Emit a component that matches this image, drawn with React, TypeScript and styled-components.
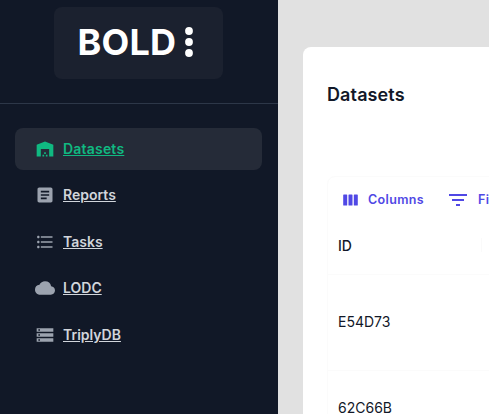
import React from "react";
import styled, { createGlobalStyle } from "styled-components";
import {
  MdArticle,
  MdCloud,
  MdFilterList,
  MdFormatListBulleted,
  MdStorage,
  MdWarehouse,
} from "react-icons/md";

const GlobalStyle = createGlobalStyle`
  * { box-sizing: border-box; }
  body {
    margin: 0;
    overflow: hidden;
    background: #e1e1e1;
    color: #121828;
    font-family: Inter, "Liberation Sans", sans-serif;
  }
`;

const Shell = styled.div`
  display: flex;
  height: 414px;
  overflow: hidden;
`;

const Sidebar = styled.aside`
  flex: 0 0 278px;
  background: #111827;
`;

const LogoArea = styled.div`
  display: flex;
  justify-content: center;
  height: 104px;
  padding: 7px 1px 0 0;
  border-bottom: 1px solid #2d3748;
`;

const LogoCard = styled.div`
  display: flex;
  align-items: center;
  width: 169px;
  height: 72px;
  padding-left: 23.5px;
  border-radius: 8px;
  background: #1b212f;
  color: #fff;
`;

const LogoText = styled.span`
  width: 106.5px;
  font-size: 36px;
  font-weight: 700;
  line-height: 44px;
  letter-spacing: 0.2px;
  padding-bottom: 2px;
`;

const LogoDots = styled.svg`
  margin-bottom: 2px;
`;

const Nav = styled.nav`
  display: flex;
  flex-direction: column;
  gap: 4.4px;
  padding: 24px 16px 0 15px;
`;

const NavItem = styled.a<{ $active?: boolean }>`
  display: flex;
  align-items: center;
  gap: 8px;
  height: 42px;
  padding-left: 20px;
  border-radius: 8px;
  background: ${(p) => (p.$active ? "#252b38" : "transparent")};
  color: ${(p) => (p.$active ? "#10b981" : "#d1d5db")};
  font-size: 14px;
  font-weight: 600;
  line-height: 24px;
  letter-spacing: ${(p) => (p.$active ? "0.2px" : "0")};

  svg {
    flex: none;
    color: ${(p) => (p.$active ? "#10b981" : "#9ca3af")};
  }
`;

const Main = styled.main`
  flex: none;
  width: 760px;
  padding: 47px 0 0 25px;
`;

const Card = styled.section`
  height: 600px;
  padding: 34px 24px;
  border-radius: 8px;
  background: #fff;
`;

const Title = styled.h1`
  margin: 0;
  height: 95px;
  font-size: 18px;
  font-weight: 600;
  line-height: 28px;
  letter-spacing: 0.12px;
`;

const Grid = styled.div`
  border: 1px solid #fbfbfb;
  border-radius: 8px;
`;

const Toolbar = styled.div`
  display: flex;
  gap: 22px;
  height: 41px;
  padding: 4px 0 0 12px;
`;

const ToolButton = styled.button`
  display: flex;
  align-items: center;
  gap: 8px;
  height: 37px;
  padding: 0;
  border: 0;
  background: none;
  color: #5048e5;
  font: 600 12.5px/22px Inter, sans-serif;
  letter-spacing: 0.36px;
`;

const HeaderRow = styled.div`
  display: flex;
  align-items: center;
  height: 57px;
  padding: 0 0 2px 10px;
  border-bottom: 1px solid #fbfbfb;
  font-size: 14px;
  font-weight: 500;
`;

const HeaderCell = styled.span`
  display: flex;
  align-items: center;
  width: 144px;
  height: 14px;
  border-right: 1px solid #fafafa;
`;

const Row = styled.div<{ $height: number }>`
  display: flex;
  align-items: center;
  height: ${(p) => p.$height}px;
  padding: 0 0 3px 10px;
  border-bottom: 1px solid #fbfbfb;
  font-size: 14px;
`;

const links = [
  { label: "Datasets", Icon: MdWarehouse, active: true },
  { label: "Reports", Icon: MdArticle },
  { label: "Tasks", Icon: MdFormatListBulleted },
  { label: "LODC", Icon: MdCloud },
  { label: "TriplyDB", Icon: MdStorage },
];

export default function App() {
  return (
    <>
      <GlobalStyle />
      <Shell>
        <Sidebar>
          <LogoArea>
            <LogoCard>
              <LogoText>BOLD</LogoText>
              <LogoDots width="10" height="32" viewBox="0 0 10 32" fill="currentColor">
                <circle cx="5" cy="5" r="3.9" />
                <circle cx="5" cy="16" r="3.9" />
                <circle cx="5" cy="27" r="3.9" />
              </LogoDots>
            </LogoCard>
          </LogoArea>
          <Nav>
            {links.map(({ label, Icon, active }) => (
              <NavItem key={label} href="#" $active={active}>
                <Icon size={20} />
                <span>{label}</span>
              </NavItem>
            ))}
          </Nav>
        </Sidebar>
        <Main>
          <Card>
            <Title>Datasets</Title>
            <Grid>
              <Toolbar>
                <ToolButton>
                  <svg width="20" height="20" viewBox="0 0 20 20" fill="currentColor">
                    <rect x="3.2" y="4.5" width="4" height="11" rx="0.6" />
                    <rect x="8.5" y="4.5" width="4" height="11" rx="0.6" />
                    <rect x="13.8" y="4.5" width="4" height="11" rx="0.6" />
                  </svg>
                  <span>Columns</span>
                </ToolButton>
                <ToolButton>
                  <MdFilterList size={24} />
                  <span>Filters</span>
                </ToolButton>
              </Toolbar>
              <HeaderRow>
                <HeaderCell>ID</HeaderCell>
              </HeaderRow>
              <Row $height={96}>E54D73</Row>
              <Row $height={76}>62C66B</Row>
            </Grid>
          </Card>
        </Main>
      </Shell>
    </>
  );
}
